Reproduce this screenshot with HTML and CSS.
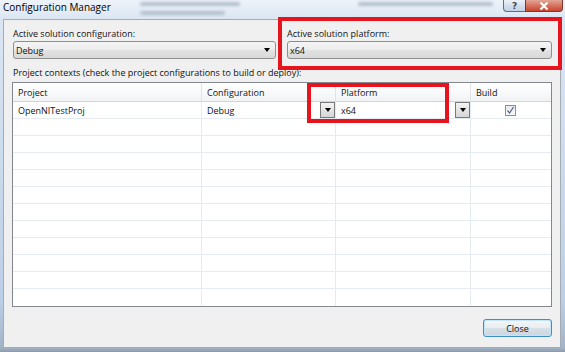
FILE: index.html
```html
<!DOCTYPE html>
<html lang="en">
<head>
  <meta charset="UTF-8">
  <meta name="viewport" content="width=device-width, initial-scale=1.0">
  <title>Configuration Manager</title>
  <link rel="stylesheet" href="styles.css">
</head>
<body>
  <div class="window">
    <div class="titlebar">
      <span class="title">Configuration Manager</span>
      <span class="glass g1"></span>
      <span class="glass g2"></span>
      <span class="glass g3"></span>
      <div class="caption-buttons">
        <div class="cap-btn help">?</div>
        <div class="cap-btn close">
          <svg width="10" height="8" viewBox="0 0 10 8">
            <path d="M1.5 0.5 L8.5 7.5 M8.5 0.5 L1.5 7.5" stroke="#fff" stroke-width="2.2" fill="none"/>
          </svg>
        </div>
      </div>
    </div>

    <div class="client">
      <div class="solution-row">
        <div class="field">
          <div class="field-label">Active solution configuration:</div>
          <div class="combo"><span>Debug</span><span class="arrow"></span></div>
        </div>
        <div class="field">
          <div class="field-label">Active solution platform:</div>
          <div class="combo"><span>x64</span><span class="arrow"></span></div>
        </div>
      </div>

      <div class="contexts-label">Project contexts (check the project configurations to build or deploy):</div>

      <div class="grid">
        <div class="grid-row head">
          <div class="cell">Project</div>
          <div class="cell">Configuration</div>
          <div class="cell">Platform</div>
          <div class="cell">Build</div>
        </div>
        <div class="grid-row first">
          <div class="cell">OpenNITestProj</div>
          <div class="cell">Debug<span class="drop"><span class="arrow"></span></span></div>
          <div class="cell">x64<span class="drop"><span class="arrow"></span></span></div>
          <div class="cell center">
            <span class="check">
              <svg width="9" height="9" viewBox="0 0 9 9">
                <path d="M1.5 4.5 L3.6 7 L7.5 1" stroke="#4d5f94" stroke-width="1.2" fill="none"/>
              </svg>
            </span>
          </div>
        </div>
        <div class="grid-row"><div class="cell"></div><div class="cell"></div><div class="cell"></div><div class="cell"></div></div>
        <div class="grid-row"><div class="cell"></div><div class="cell"></div><div class="cell"></div><div class="cell"></div></div>
        <div class="grid-row"><div class="cell"></div><div class="cell"></div><div class="cell"></div><div class="cell"></div></div>
        <div class="grid-row"><div class="cell"></div><div class="cell"></div><div class="cell"></div><div class="cell"></div></div>
        <div class="grid-row"><div class="cell"></div><div class="cell"></div><div class="cell"></div><div class="cell"></div></div>
        <div class="grid-row"><div class="cell"></div><div class="cell"></div><div class="cell"></div><div class="cell"></div></div>
        <div class="grid-row"><div class="cell"></div><div class="cell"></div><div class="cell"></div><div class="cell"></div></div>
        <div class="grid-row"><div class="cell"></div><div class="cell"></div><div class="cell"></div><div class="cell"></div></div>
        <div class="grid-row"><div class="cell"></div><div class="cell"></div><div class="cell"></div><div class="cell"></div></div>
        <div class="grid-row"><div class="cell"></div><div class="cell"></div><div class="cell"></div><div class="cell"></div></div>
        <div class="grid-row last"><div class="cell"></div><div class="cell"></div><div class="cell"></div><div class="cell"></div></div>
      </div>

      <div class="footer">
        <button class="close-btn">Close</button>
      </div>
    </div>

    <div class="mark mark-platform"></div>
    <div class="mark mark-cell"></div>
  </div>
</body>
</html>
```

FILE: styles.css
```css
* {
  box-sizing: border-box;
}
body {
  margin: 0;
  width: 565px;
  height: 352px;
  overflow: hidden;
  font-family: "Open Sans", "Noto Sans", sans-serif;
  font-size: 9px;
  color: #111;
}
.window {
  position: relative;
  width: 565px;
  height: 352px;
  background: linear-gradient(to bottom, #eef3fa 0, #dbe6f3 19px, #bccfe7 300px, #a2b3c7 348px, #8f9aa6 352px);
}

/* title bar */
.titlebar {
  position: relative;
  height: 19px;
  display: flex;
  align-items: flex-start;
  padding-left: 3px;
  overflow: hidden;
}
.title {
  position: relative;
  z-index: 1;
  font-size: 10px;
  line-height: 14px;
  color: #000;
}
.glass {
  position: absolute;
  height: 4px;
  border-radius: 2px;
  background: #b3bfcd;
  filter: blur(1.5px);
}
.g1 { left: 140px; top: 2px; width: 100px; }
.g2 { left: 140px; top: 11px; width: 85px; }
.g3 { left: 358px; top: 2px; width: 135px; }
.caption-buttons {
  position: relative;
  z-index: 1;
  margin-left: auto;
  margin-right: 2px;
  display: flex;
}
.cap-btn {
  height: 12px;
  display: flex;
  align-items: center;
  justify-content: center;
  border: 1px solid #5d6f88;
  border-top: none;
}
.help {
  width: 22px;
  border-right: none;
  border-radius: 0 0 0 4px;
  background: linear-gradient(#eef2f7, #d4dfec 50%, #c2d1e3);
  color: #3e4a5a;
  font-family: "DejaVu Sans", sans-serif;
  font-weight: bold;
  font-size: 9px;
  line-height: 10px;
}
.close {
  width: 38px;
  border-radius: 0 0 4px 0;
  border-color: #7a3a30;
  background: linear-gradient(#e4a597, #d6735f 50%, #c7462f);
}

/* dialog body */
.client {
  margin-left: 3px;
  width: 558px;
  height: 329px;
  border: 1px solid #a4acb6;
  background: #f0f0f0;
  padding: 8px 8px 0 9px;
  display: flex;
  flex-direction: column;
}
.solution-row {
  display: grid;
  grid-template-columns: 263px 265px;
  column-gap: 11px;
}
.field-label {
  line-height: 12px;
  margin-bottom: 1px;
}
.combo {
  height: 18px;
  display: flex;
  align-items: center;
  justify-content: space-between;
  padding: 0 5px 0 2px;
  border: 1px solid #8e8f8f;
  border-radius: 3px;
  background: linear-gradient(#f5f5f5, #ececec 50%, #e2e2e2 51%, #d9d9d9);
}
.arrow {
  width: 0;
  height: 0;
  border-left: 3px solid transparent;
  border-right: 3px solid transparent;
  border-top: 4px solid #000;
}
.contexts-label {
  line-height: 12px;
  margin-top: 8px;
}

/* project grid */
.grid {
  margin-top: 3px;
  margin-left: -1px;
  width: 540px;
  border: 1px solid #828790;
  background: #fff;
}
.grid-row {
  display: grid;
  grid-template-columns: 189px 134px 135px 80px;
  height: 17px;
}
.cell {
  display: flex;
  align-items: center;
  padding-left: 5px;
  border-right: 1px solid #e4ebf2;
  border-bottom: 1px solid #e4ebf2;
  white-space: nowrap;
}
.cell:last-child {
  border-right: none;
}
.grid-row.head {
  height: 19px;
  background: linear-gradient(#ffffff, #f7f8f9 60%, #f1f2f4);
}
.head .cell {
  border-right-color: #e2e3e5;
  border-bottom-color: #d5d5d5;
}
.first .cell {
  padding-top: 1px;
}
.grid-row.last .cell {
  border-bottom: none;
}
.drop {
  margin-left: auto;
  width: 15px;
  height: 16px;
  margin-top: -1px;
  display: flex;
  align-items: center;
  justify-content: center;
  border: 1px solid #7a7a7a;
  background: linear-gradient(#f4f4f4, #e4e4e4 50%, #d6d6d6);
}
.center {
  justify-content: center;
  padding-left: 0;
  padding-right: 1px;
}
.check {
  width: 11px;
  height: 11px;
  display: flex;
  align-items: center;
  justify-content: center;
  border: 1px solid #8f8f8f;
  background: linear-gradient(#e9e9e9, #fbfbfb);
}

/* footer */
.footer {
  margin-top: auto;
  margin-bottom: 10px;
  display: flex;
  justify-content: flex-end;
}
.close-btn {
  width: 69px;
  height: 18px;
  padding: 0;
  font-family: inherit;
  font-size: 9px;
  color: #111;
  border: 1px solid #3d8ec9;
  border-radius: 3px;
  box-shadow: inset 0 0 0 1px #c4e5f8;
  background: linear-gradient(#f4f6f8, #e9edf1 50%, #d9e0e7 51%, #ccd6df);
}

/* red annotation boxes */
.mark {
  position: absolute;
  border: 4px solid #e6141d;
}
.mark-platform {
  left: 278px;
  top: 17px;
  width: 284px;
  height: 53px;
}
.mark-cell {
  left: 307px;
  top: 83px;
  width: 142px;
  height: 40px;
}
```
